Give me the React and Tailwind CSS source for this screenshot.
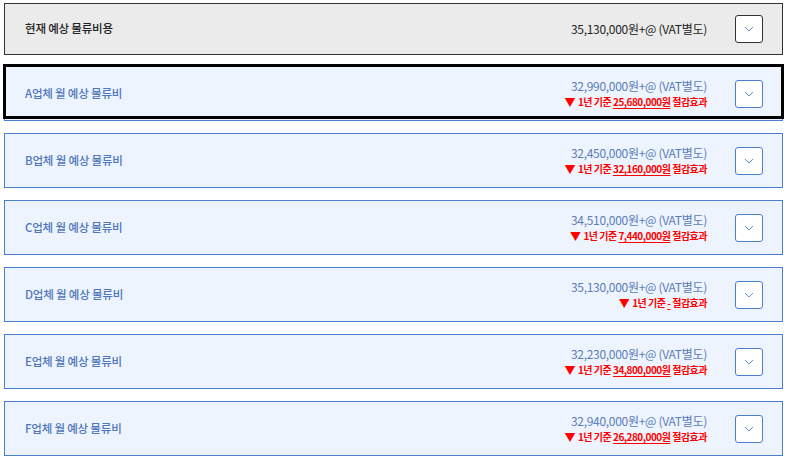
import React from 'react';

const FONT = { fontFamily: '"Noto Sans CJK KR", "Noto Sans", sans-serif' };

const rows = [
  { name: 'A', price: '32,990,000', save: '25,680,000원', selected: true },
  { name: 'B', price: '32,450,000', save: '32,160,000원' },
  { name: 'C', price: '34,510,000', save: '7,440,000원' },
  { name: 'D', price: '35,130,000', save: '-' },
  { name: 'E', price: '32,230,000', save: '34,800,000원' },
  { name: 'F', price: '32,940,000', save: '26,280,000원' },
];

function Chevron({ dark }) {
  return (
    <button
      className={`w-[28px] h-[28px] rounded-[3px] bg-white flex items-center justify-center border ${
        dark ? 'border-[#333]' : 'border-[#4a7fcf]'
      }`}
    >
      <svg width="10" height="6" viewBox="0 0 10 6" fill="none">
        <path d="M1 1l4 4 4-4" stroke="#6b8fd0" strokeWidth="1" />
      </svg>
    </button>
  );
}

function CompanyRow({ row }) {
  return (
    <div className="relative h-[55px] border border-[#4a7fcf] bg-[#edf4fd] flex items-center pl-[20px] pr-[19px]">
      {row.selected && (
        <div className="absolute -top-[3px] -left-[2px] -right-[2px] bottom-[1px] border-[3px] border-black pointer-events-none" />
      )}
      <div className="text-[11.5px] font-medium text-[#4f76bd] flex-1 tracking-[-0.2px]">{row.name}업체 월 예상 물류비</div>
      <div className="flex flex-col items-end mr-[28px] leading-none">
        <div className="text-[12px] text-[#5b7cb8] tracking-[-0.3px]">{row.price}원+@ (VAT별도)</div>
        <div className="mt-[5px] text-[10px] font-bold text-[#ff0000] flex items-center tracking-[-0.5px]">
          <span className="text-[11px] mr-[3px]">▼</span>
          <span>1년 기준&nbsp;</span>
          <span className="underline underline-offset-2">{row.save}</span>
          <span>&nbsp;절감효과</span>
        </div>
      </div>
      <Chevron />
    </div>
  );
}

export default function App() {
  return (
    <div className="w-[789px] h-[461px] bg-white pt-[3px] pl-[4px] pr-[6px]" style={FONT}>
      <div className="h-[52px] border border-[#333] bg-[#ebebeb] flex items-center pl-[20px] pr-[19px] mb-[11px]">
        <div className="text-[11.5px] font-medium text-[#222] flex-1 tracking-[-0.2px]">현재 예상 물류비용</div>
        <div className="text-[12px] text-[#222] mr-[28px] tracking-[-0.3px]">35,130,000원+@ (VAT별도)</div>
        <Chevron dark />
      </div>
      <div className="flex flex-col gap-[12px]">
        {rows.map((r) => (
          <CompanyRow key={r.name} row={r} />
        ))}
      </div>
    </div>
  );
}
